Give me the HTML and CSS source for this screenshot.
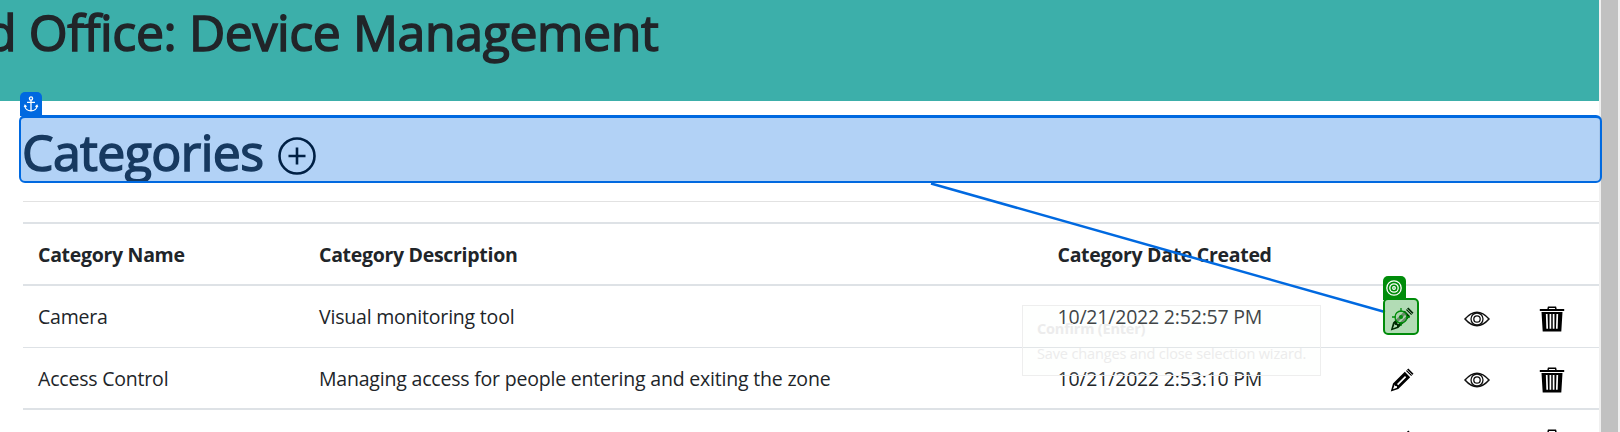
FILE: index.html
```
<!DOCTYPE html>
<html lang="en">
<head>
<meta charset="utf-8">
<title>Device Management</title>
<link rel="stylesheet" href="styles.css">
</head>
<body>
<svg class="defs" aria-hidden="true">
  <symbol id="pencil" viewBox="0 0 24 24">
    <path fill="#000" fill-rule="evenodd" d="M.8 23.500 3 15.500 14.800 3.800 20.200 9.200 8.300 21zM3 21.200 7 19.800 7 18.200 5.200 18 4.800 16.600zM7 16 8.200 17.200 16.200 9.300 15 8.100z"/>
    <path fill="#000" d="M16 2.900 18.300 .6 23.500 5.800 21.200 8.100z"/>
    <path stroke="#fff" stroke-width=".8" d="M17.200 2 22 6.900"/>
  </symbol>
  <symbol id="eye" viewBox="0 0 26 16">
    <path fill="none" stroke="#111" stroke-width="1.500" d="M1 8Q13-5.500 25 8 13 21.500 1 8z"/>
    <circle cx="13" cy="8" r="6" fill="none" stroke="#111" stroke-width="1.300"/>
    <circle cx="13" cy="8" r="3.200" fill="none" stroke="#111" stroke-width="1.300"/>
  </symbol>
  <symbol id="trash" viewBox="0 0 26 26">
    <path fill="none" stroke="#000" stroke-width="1.500" d="M9 3 9.500 1.300H16.500L17 3"/>
    <path fill="#000" d="M.8 2.900H25.200V5H.8zM2.500 6H23.500L22.300 25.500H3.700z"/>
    <path stroke="#fff" stroke-width="1.700" d="M7.700 8 8.200 22.800M18.300 8 17.800 22.800M11.400 8V22.800M14.600 8V22.800"/>
  </symbol>
</svg>
<div class="screen">
  <div class="page">
    <header class="banner"><h1 class="title">d Office: Device Management</h1></header>
    <main class="content">
      <div class="heading">
        <h1 class="heading-text">Categories</h1>
        <svg class="plus" viewBox="0 0 38 38"><circle cx="19" cy="19" r="17.500"/><path d="M19 10.500V27.500M10.500 19H27.500"/></svg>
      </div>
      <div class="table">
        <div class="row head">
          <span>Category Name</span><span>Category Description</span><span>Category Date Created</span>
        </div>
        <div class="row">
          <span>Camera</span><span>Visual monitoring tool</span><span>10/21/2022 2:52:57 PM</span>
          <svg class="i-pencil"><use href="#pencil"/></svg><svg class="i-eye"><use href="#eye"/></svg><svg class="i-trash"><use href="#trash"/></svg>
        </div>
        <div class="row last">
          <span>Access Control</span><span>Managing access for people entering and exiting the zone</span><span>10/21/2022 2:53:10 PM</span>
          <svg class="i-pencil"><use href="#pencil"/></svg><svg class="i-eye"><use href="#eye"/></svg><svg class="i-trash"><use href="#trash"/></svg>
        </div>
        <div class="row next">
          <span></span><span></span><span></span>
          <svg class="i-pencil"><use href="#pencil"/></svg><svg class="i-eye"><use href="#eye"/></svg><svg class="i-trash"><use href="#trash"/></svg>
        </div>
      </div>
    </main>
  </div>
  <div class="scrollbar"></div>

  <div class="tooltip"><b class="tip-title">Confirm (Enter)</b><span class="tip-text">Save changes and close selection wizard.</span></div>
  <svg class="connector" viewBox="0 0 1620 432"><path d="M931 183.500 1385 312"/></svg>
  <div class="anchor-box"></div>
  <div class="tab anchor-tab">
    <svg viewBox="0 0 14 16"><circle cx="7" cy="2.500" r="1.600"/><path d="M7 4V15M3 6.300H11M.8 9.500C1 13 4 14.800 7 14.800S13 13 13.200 9.500M.3 11 1 9.300 2.500 10.800M13.700 11 13 9.300 11.500 10.800"/></svg>
  </div>
  <div class="target-box">
    <svg viewBox="0 0 18 18"><circle cx="9" cy="9" r="6"/><path d="M9 0V4M9 14V18M0 9H4M14 9H18"/><circle class="dot" cx="9" cy="9" r="2"/></svg>
  </div>
  <div class="tab target-tab">
    <svg viewBox="0 0 16 16"><circle cx="8" cy="8" r="7.200"/><circle cx="8" cy="8" r="4.200"/><circle cx="8" cy="8" r="1.300"/></svg>
  </div>
</div>
</body>
</html>
```
FILE: styles.css
```
* { box-sizing: border-box; }
body { margin: 0; background: #fff; color: #212529; font-family: "Open Sans", "Noto Sans", sans-serif; }
.defs { position: absolute; width: 0; height: 0; }
.screen { position: relative; display: flex; width: 1620px; height: 432px; overflow: hidden; }
.page { width: 1599px; flex: none; }
.scrollbar { width: 21px; background: #c1c1c1; border-left: 2px solid #f0f0f0; border-right: 2px solid #f0f0f0; }
.banner { height: 101px; background: #3cafaa; overflow: hidden; }
h1 { margin: 0; font-size: 50px; font-weight: 500; line-height: 60px; white-space: nowrap; -webkit-text-stroke: 1.500px currentColor; }
.title { margin-left: -14px; padding-top: 2px; letter-spacing: -.4px; }
.content { padding-left: 23px; }
.heading { display: flex; height: 101px; padding-top: 21px; border-bottom: 1px solid #e2e2e2; overflow: hidden; }
.heading-text { width: 256px; height: 60px; margin-left: -1px; overflow: hidden; letter-spacing: -.6px; }
.plus { width: 38px; height: 38px; margin-top: 15px; fill: none; stroke: #000; stroke-width: 2.600; }
.table { margin-top: 20px; border-top: 2px solid #dee2e6; font-size: 19.500px; letter-spacing: -.2px; }
.row { display: grid; grid-template-columns: 281px 738.500px 322px 75px 75px 75px; height: 61.500px; align-items: center; justify-items: center; border-bottom: 1px solid #dee2e6; white-space: nowrap; }
.row span { justify-self: start; padding-left: 15px; }
.row svg { margin-top: 5px; }
.head { height: 62px; padding-top: 1px; border-bottom-width: 2px; font-weight: 700; letter-spacing: -.3px; }
.last { height: 62.500px; padding-top: 1px; border-bottom-width: 2px; }
.last svg { margin-top: 3px; }
.next svg { margin-top: 3px; }
.i-pencil { width: 24px; height: 24px; }
.i-eye { width: 26px; height: 16px; }
.i-trash { width: 26px; height: 26px; }
.tooltip { position: absolute; left: 1022px; top: 305px; width: 299px; height: 71px; padding: 11px 14px; display: flex; flex-direction: column; border: 1px solid #eee; background: rgba(245,255,250,.15); color: #ececec; font-size: 14.500px; line-height: 26px; letter-spacing: -.14px; white-space: nowrap; }
.tip-title { height: 26px; line-height: 24px; letter-spacing: -.2px; }
.connector { position: absolute; left: 0; top: 0; width: 1620px; height: 432px; fill: none; stroke: #0069e0; stroke-width: 2.500; }
.anchor-box { position: absolute; left: 19px; top: 115px; width: 1583px; height: 68px; border: 2px solid #0069e0; border-top-width: 3px; border-radius: 6px; background: rgba(0,105,224,.3); }
.tab { position: absolute; width: 22.500px; height: 24px; border-radius: 5px 5px 0 0; display: flex; align-items: center; justify-content: center; }
.tab svg { width: 16px; height: 16px; fill: none; stroke: #fff; stroke-width: 1.300; }
.anchor-tab { left: 19.500px; top: 92px; background: #0069e0; }
.target-tab { left: 1383px; top: 275.500px; background: #008c0a; }
.target-box { position: absolute; left: 1383px; top: 298px; width: 36px; height: 37px; border: 2px solid #008c0a; border-radius: 5px; background: rgba(0,140,10,.3); display: flex; align-items: center; justify-content: center; }
.target-box svg { width: 18px; height: 18px; fill: rgba(170,205,170,.6); stroke: #008c0a; stroke-width: 1.300; }
.target-box .dot { fill: #008c0a; stroke: none; }
```
